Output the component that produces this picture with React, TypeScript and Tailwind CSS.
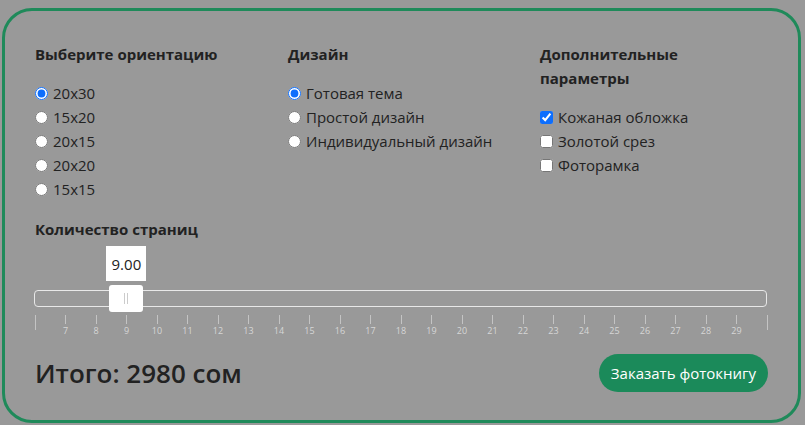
import { useState } from "react";

const font = { fontFamily: '"Open Sans", "Noto Sans", sans-serif' };

const sizes = ["20x30", "15x20", "20x15", "20x20", "15x15"];
const designs = ["Готовая тема", "Простой дизайн", "Индивидуальный дизайн"];
const extras = ["Кожаная обложка", "Золотой срез", "Фоторамка"];

const ticks = Array.from({ length: 25 }, (_, i) => i + 6);

function Radio({
  name,
  label,
  checked,
  onChange,
}: {
  name: string;
  label: string;
  checked: boolean;
  onChange: () => void;
}) {
  return (
    <label className="flex h-6 items-center gap-[5px]">
      <input
        type="radio"
        name={name}
        checked={checked}
        onChange={onChange}
        className="m-0 h-[13px] w-[13px] accent-[#0d6efd]"
      />
      <span>{label}</span>
    </label>
  );
}

function Check({
  label,
  checked,
  onChange,
}: {
  label: string;
  checked: boolean;
  onChange: () => void;
}) {
  return (
    <label className="flex h-6 items-center gap-[5px]">
      <input
        type="checkbox"
        checked={checked}
        onChange={onChange}
        className="m-0 h-[13px] w-[13px] accent-[#0d6efd]"
      />
      <span>{label}</span>
    </label>
  );
}

export default function App() {
  const [size, setSize] = useState(0);
  const [design, setDesign] = useState(0);
  const [opts, setOpts] = useState([true, false, false]);
  const pages = 9;
  const pct = ((pages - 6) / 24) * 100;

  return (
    <div className="h-[425px] w-[805px] bg-[#999999] pl-[2px] pt-[8px]" style={font}>
      <div className="h-[415px] w-[799px] rounded-[30px] border-[3px] border-[#1f8a5a] px-[30px] pt-[31px] text-[15px] leading-6 text-[#222]">
        {/* options */}
        <div className="grid grid-cols-[253px_252px_200px]">
          <div>
            <h5 className="mb-[15px] font-bold">Выберите ориентацию</h5>
            {sizes.map((s, i) => (
              <Radio key={s} name="size" label={s} checked={size === i} onChange={() => setSize(i)} />
            ))}
          </div>
          <div>
            <h5 className="mb-[15px] font-bold">Дизайн</h5>
            {designs.map((d, i) => (
              <Radio key={d} name="design" label={d} checked={design === i} onChange={() => setDesign(i)} />
            ))}
          </div>
          <div>
            <h5 className="mb-[15px] font-bold">Дополнительные параметры</h5>
            {extras.map((e, i) => (
              <Check
                key={e}
                label={e}
                checked={opts[i]}
                onChange={() => setOpts(opts.map((v, j) => (j === i ? !v : v)))}
              />
            ))}
          </div>
        </div>

        {/* pages slider */}
        <h5 className="mt-4 font-bold">Количество страниц</h5>
        <div className="relative mt-[49px] h-[17px] w-[733px] -ml-px rounded-[4px] border border-[#e8e8e8]">
          <div
            className="absolute top-[-45px] flex h-[35px] w-10 -translate-x-1/2 items-center justify-center bg-white text-[15px] text-[#222]"
            style={{ left: `${pct}%` }}
          >
            9.00
          </div>
          <div
            className="absolute top-[-6px] flex h-[27px] w-[34px] -translate-x-1/2 items-center justify-center gap-[2px] rounded-[3px] bg-white"
            style={{ left: `${pct}%` }}
          >
            <span className="h-[11px] w-px bg-[#ccc]" />
            <span className="h-[11px] w-px bg-[#ccc]" />
          </div>
        </div>
        <div className="mt-[8px] flex w-[732px] justify-between">
          {ticks.map((t, i) => {
            const edge = i === 0 || i === ticks.length - 1;
            return (
              <div key={t} className="flex w-0 flex-col items-center">
                <span className={`w-px shrink-0 bg-[#c4c4c4] ${edge ? "h-[15px]" : "h-[9px]"}`} />
                {!edge && (
                  <span className="mt-px text-[9px] leading-3 text-[#d6d6d6]">{t}</span>
                )}
              </div>
            );
          })}
        </div>

        {/* total */}
        <div className="mt-[17px] flex items-center justify-between">
          <h3 className="text-[26px] font-semibold leading-8">Итого: 2980 сом</h3>
          <button className="h-[38px] rounded-full bg-[#1b8a5a] px-[12px] text-[15px] text-white">
            Заказать фотокнигу
          </button>
        </div>
      </div>
    </div>
  );
}
